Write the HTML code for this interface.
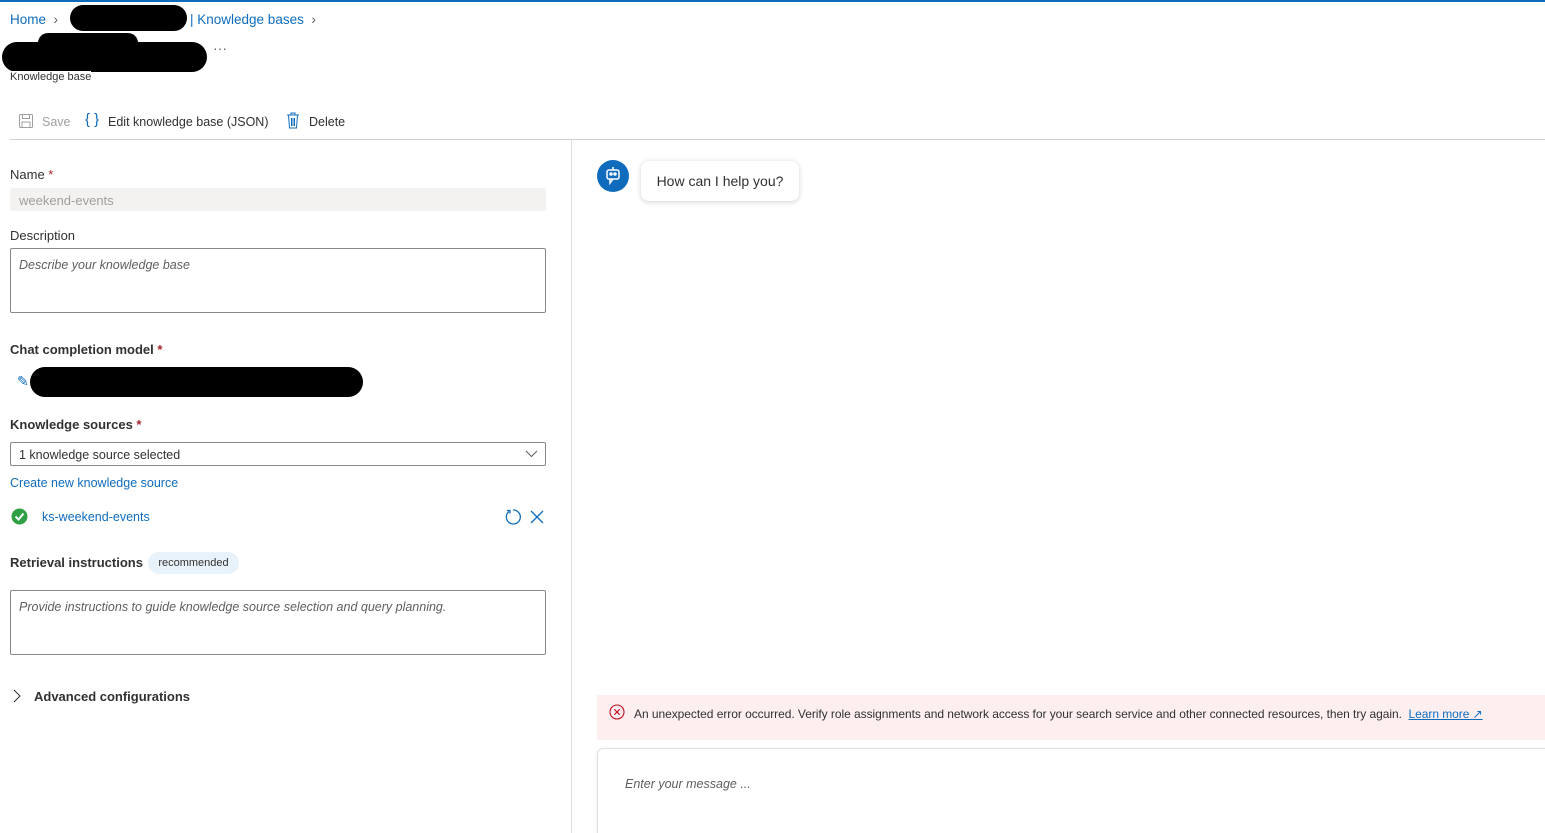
<!DOCTYPE html>
<html style="overflow:hidden"><head><meta charset="utf-8"><style>
*{box-sizing:border-box}
html,body{margin:0;width:1545px;height:833px;overflow:hidden}
body{background:#fff;font-family:"Liberation Sans",sans-serif;color:#323130;position:relative}
.a{position:absolute;white-space:nowrap}
.blue{color:#0f6cbd}
.lbl{font-size:13px}
.b{font-weight:bold;font-size:13px}
.req{color:#a4262c}
.box{position:absolute;border:1px solid #8a8886;border-radius:2px;background:#fff}
.blob{position:absolute;background:#000;border-radius:20px}
</style></head><body>
<div class="a" style="left:0;top:0;width:1545px;height:2px;background:#0f6cbd"></div>
<div class="a blue" style="left:10px;top:12px;font-size:13.5px">Home&nbsp;&nbsp;<span style="color:#605e5c">›</span></div>
<div class="blob" style="left:70px;top:5px;width:117px;height:26px"></div>
<div class="a blue" style="left:190px;top:12px;font-size:13.5px">| Knowledge bases&nbsp;&nbsp;<span style="color:#605e5c">›</span></div>
<div class="blob" style="left:2px;top:42px;width:205px;height:30px"></div>
<div class="blob" style="left:38px;top:33px;width:100px;height:20px"></div>
<div class="a" style="left:213px;top:40px;font-size:14px;color:#605e5c">···</div>
<div class="a" style="left:10px;top:71px;font-size:11px;color:#323130;background:#fff">Knowledge base</div>
<svg class="a" style="left:18px;top:113px" width="16" height="16" viewBox="0 0 16 16" fill="none" stroke="#a19f9d"><rect x="1.5" y="1.5" width="13" height="13" rx="1"/><rect x="4.5" y="1.5" width="7" height="4"/><rect x="4" y="9" width="8" height="5.5"/></svg>
<div class="a" style="left:42px;top:115px;font-size:12.5px;color:#a19f9d">Save</div>
<div class="a blue" style="left:85px;top:111px;font-size:15px">{ }</div>
<div class="a" style="left:108px;top:115px;font-size:12.5px">Edit knowledge base (JSON)</div>
<svg class="a" style="left:286px;top:112px" width="14" height="17" viewBox="0 0 14 17" fill="none" stroke="#0f6cbd"><path d="M1 3h12M5 3V1h4v2M2.5 3l1 13h7l1-13M5.5 6v8M7 6v8M8.5 6v8"/></svg>
<div class="a" style="left:309px;top:115px;font-size:12.5px">Delete</div>
<div class="a" style="left:10px;top:139px;width:1535px;height:1px;background:#d2d0ce"></div>
<div class="a" style="left:571px;top:140px;width:1px;height:693px;background:#e1dfdd"></div>

<div class="a lbl" style="left:10px;top:167px">Name <span class="req">*</span></div>
<div class="a" style="left:10px;top:188px;width:536px;height:23px;background:#f3f2f1;border-radius:2px"></div>
<div class="a" style="left:19px;top:193px;font-size:13px;color:#a19f9d">weekend-events</div>
<div class="a lbl" style="left:10px;top:228px">Description</div>
<div class="box" style="left:10px;top:248px;width:536px;height:65px"></div>
<div class="a" style="left:19px;top:258px;font-size:12.5px;font-style:italic;color:#605e5c">Describe your knowledge base</div>
<div class="a b" style="left:10px;top:342px">Chat completion model <span class="req">*</span></div>
<div class="a blue" style="left:17px;top:373px;font-size:14px">✎</div>
<div class="blob" style="left:30px;top:367px;width:333px;height:30px"></div>
<div class="a b" style="left:10px;top:417px">Knowledge sources <span class="req">*</span></div>
<div class="box" style="left:10px;top:442px;width:536px;height:24px"></div>
<div class="a" style="left:19px;top:448px;font-size:12.5px">1 knowledge source selected</div>
<svg class="a" style="left:525px;top:450px" width="13" height="8" viewBox="0 0 13 8" fill="none" stroke="#605e5c"><path d="M1 1l5.5 5.5L12 1"/></svg>
<div class="a blue" style="left:10px;top:476px;font-size:12.5px">Create new knowledge source</div>
<svg class="a" style="left:11px;top:508px" width="17" height="17" viewBox="0 0 17 17"><circle cx="8.5" cy="8.5" r="8" fill="#2ea043"/><path d="M4.5 8.5l3 3 5-6" stroke="#fff" stroke-width="2" fill="none"/></svg>
<div class="a blue" style="left:42px;top:510px;font-size:12.5px">ks-weekend-events</div>
<svg class="a" style="left:504px;top:508px" width="18" height="18" viewBox="0 0 18 18" fill="none" stroke="#0f6cbd" stroke-width="1.3"><path d="M5 3.5A7 7 0 1 0 9 2"/><path d="M3 2.5h3v3"/></svg>
<svg class="a" style="left:530px;top:510px" width="14" height="14" viewBox="0 0 14 14" stroke="#0f6cbd" stroke-width="1.3"><path d="M1 1l12 12M13 1L1 13"/></svg>
<div class="a b" style="left:10px;top:555px">Retrieval instructions</div>
<div class="a" style="left:148px;top:552px;width:91px;height:22px;border-radius:11px;background:#e8f2fb;font-size:11px;line-height:22px;text-align:center">recommended</div>
<div class="box" style="left:10px;top:590px;width:536px;height:65px"></div>
<div class="a" style="left:19px;top:600px;font-size:12.5px;font-style:italic;color:#605e5c">Provide instructions to guide knowledge source selection and query planning.</div>
<svg class="a" style="left:12px;top:689px" width="9" height="14" viewBox="0 0 9 14" fill="none" stroke="#323130"><path d="M2 1l6 6-6 6"/></svg>
<div class="a b" style="left:34px;top:689px">Advanced configurations</div>

<div class="a" style="left:597px;top:160px;width:32px;height:32px;border-radius:50%;background:#0f6cbd"></div>
<svg class="a" style="left:604px;top:166px" width="18" height="20" viewBox="0 0 18 20" fill="none" stroke="#fff" stroke-width="1.5"><path d="M9 1v3"/><rect x="3" y="4" width="12" height="9" rx="2"/><circle cx="7" cy="8" r="1" fill="#fff"/><circle cx="11" cy="8" r="1" fill="#fff"/><path d="M6 13v4l3-4"/></svg>
<div class="a" style="left:641px;top:161px;width:158px;height:40px;border-radius:8px;background:#fff;box-shadow:0 1px 6px rgba(0,0,0,.18);font-size:14px;line-height:40px;text-align:center">How can I help you?</div>

<div class="a" style="left:597px;top:695px;width:948px;height:45px;background:#fdeff0"></div>
<svg class="a" style="left:609px;top:704px" width="16" height="16" viewBox="0 0 16 16" fill="none" stroke="#c50f1f" stroke-width="1.1"><circle cx="8" cy="8" r="7"/><path d="M5.3 5.3l5.4 5.4M10.7 5.3l-5.4 5.4"/></svg>
<div class="a" style="left:634px;top:707px;font-size:12px;letter-spacing:-0.05px">An unexpected error occurred. Verify role assignments and network access for your search service and other connected resources, then try again.&nbsp; <span class="blue" style="text-decoration:underline">Learn more ↗</span></div>
<div class="a" style="left:597px;top:748px;width:960px;height:100px;border:1px solid #e1dfdd;border-radius:6px;box-shadow:0 1px 4px rgba(0,0,0,.08)"></div>
<div class="a" style="left:625px;top:777px;font-size:12.5px;font-style:italic;color:#605e5c">Enter your message ...</div>
</body></html>
